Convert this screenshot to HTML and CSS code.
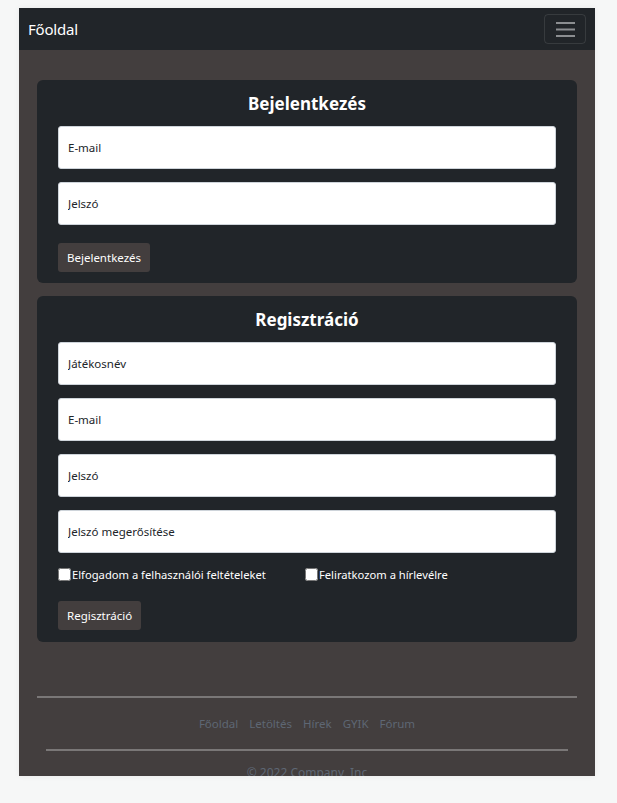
FILE: index.html
```html
<!DOCTYPE html>
<html lang="hu">
<head>
<meta charset="utf-8">
<title>Főoldal</title>
<link rel="stylesheet" href="styles.css">
</head>
<body>
<div class="frame">
  <nav class="navbar">
    <a class="brand" href="#">Főoldal</a>
    <button class="toggler" type="button" aria-label="Menü">
      <svg width="19" height="15" viewBox="0 0 19 15"><rect x="0" y="0" width="19" height="2" fill="#8b8e91"/><rect x="0" y="6.5" width="19" height="2" fill="#8b8e91"/><rect x="0" y="13" width="19" height="2" fill="#8b8e91"/></svg>
    </button>
  </nav>
  <main class="main">
    <section class="card">
      <h2 class="card-title">Bejelentkezés</h2>
      <input class="field" type="text" placeholder="E-mail">
      <input class="field" type="password" placeholder="Jelszó">
      <button class="btn" type="button">Bejelentkezés</button>
    </section>
    <section class="card">
      <h2 class="card-title">Regisztráció</h2>
      <input class="field" type="text" placeholder="Játékosnév">
      <input class="field" type="text" placeholder="E-mail">
      <input class="field" type="password" placeholder="Jelszó">
      <input class="field" type="password" placeholder="Jelszó megerősítése">
      <div class="checks">
        <label class="check"><input type="checkbox"> Elfogadom a felhasználói feltételeket</label>
        <label class="check"><input type="checkbox"> Feliratkozom a hírlevélre</label>
      </div>
      <button class="btn" type="button">Regisztráció</button>
    </section>
  </main>
  <footer class="footer">
    <hr class="rule">
    <ul class="links">
      <li><a href="#">Főoldal</a></li>
      <li><a href="#">Letöltés</a></li>
      <li><a href="#">Hírek</a></li>
      <li><a href="#">GYIK</a></li>
      <li><a href="#">Fórum</a></li>
    </ul>
    <hr class="rule inner">
    <p class="copy">© 2022 Company, Inc</p>
  </footer>
</div>
</body>
</html>
```
FILE: styles.css
```css
html, body {
  margin: 0;
  padding: 0;
}
body {
  background: #f6f7f7;
  font-family: "Noto Sans", "Open Sans", sans-serif;
  padding-top: 8px;
  padding-left: 19px;
  height: 803px;
  box-sizing: border-box;
}
.frame {
  width: 576px;
  height: 768px;
  overflow: hidden;
  background: #433e3e;
  box-shadow: 0 0 6px rgba(0,0,0,0.06);
}
.navbar {
  height: 42px;
  background: #212529;
  display: flex;
  align-items: center;
  justify-content: space-between;
  padding: 0 9px;
}
.brand {
  color: #fff;
  text-decoration: none;
  font-size: 15px;
  letter-spacing: -0.2px;
}
.toggler {
  width: 42px;
  height: 30px;
  background: transparent;
  border: 1px solid rgba(255,255,255,0.1);
  border-radius: 4px;
  display: flex;
  align-items: center;
  justify-content: center;
  padding: 0;
}
.main {
  padding: 30px 18px 0;
  display: flex;
  flex-direction: column;
  gap: 13px;
}
.card {
  background: #212529;
  border-radius: 6px;
  padding: 12px 21px 11px;
  display: flex;
  flex-direction: column;
  align-items: flex-start;
  gap: 13px;
}
.card-title {
  align-self: stretch;
  text-align: center;
  color: #fff;
  font-size: 17px;
  font-weight: 700;
  line-height: 24px;
  margin: 0 0 -3px;
}
.card-title + .field {
  margin-top: 0;
}
.field {
  align-self: stretch;
  box-sizing: border-box;
  height: 43px;
  border: 1px solid #ced4da;
  border-radius: 3px;
  background: #fff;
  padding: 0 9px;
  font-family: inherit;
  font-size: 11.5px;
  color: #212529;
  outline: none;
}
.field::placeholder {
  color: #212529;
  opacity: 1;
}
.btn {
  margin-top: 5px;
  background: #433e3e;
  color: #fff;
  border: none;
  border-radius: 3px;
  height: 29px;
  padding: 0 9px;
  font-family: inherit;
  font-size: 11.5px;
}
.checks {
  align-self: stretch;
  display: grid;
  grid-template-columns: 247px 1fr;
  margin-top: 1px;
  margin-bottom: 1px;
}
.checks + .btn {
  margin-bottom: 1px;
}
.check {
  color: #fff;
  font-size: 11.2px;
  display: flex;
  align-items: center;
  gap: 1px;
}
.check input {
  margin: 0;
  width: 13px;
  height: 13px;
}
.footer {
  margin-top: 54px;
  text-align: center;
}
.rule {
  margin: 0 18px;
  border: none;
  border-top: 2px solid #7a7777;
}
.rule.inner {
  margin: 0 27px;
}
.links {
  list-style: none;
  margin: 0;
  padding: 18px 0;
  display: flex;
  justify-content: center;
  gap: 11px;
  font-size: 11.5px;
}
.links a {
  color: #5e6774;
  text-decoration: none;
}
.copy {
  margin: 13px 0 0;
  color: #5e6774;
  font-size: 12px;
}
```
